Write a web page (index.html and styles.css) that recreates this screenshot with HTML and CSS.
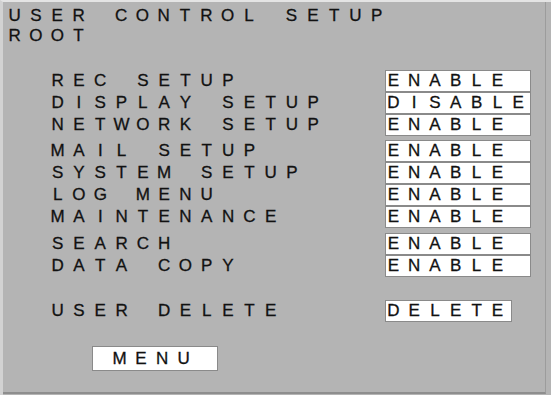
FILE: index.html
```html
<!DOCTYPE html>
<html>
<head>
<meta charset="utf-8">
<link rel="stylesheet" href="styles.css">
</head>
<body>
<div class="frame">
  <div class="panel">
    <div class="line"><span class="c">U</span><span class="c">S</span><span class="c">E</span><span class="c">R</span><span class="c">&nbsp;</span><span class="c">C</span><span class="c">O</span><span class="c">N</span><span class="c">T</span><span class="c">R</span><span class="c">O</span><span class="c">L</span><span class="c">&nbsp;</span><span class="c">S</span><span class="c">E</span><span class="c">T</span><span class="c">U</span><span class="c">P</span></div>
    <div class="line"><span class="c">R</span><span class="c">O</span><span class="c">O</span><span class="c">T</span></div>
    <div class="grid">
      <div class="label"><span class="c">R</span><span class="c">E</span><span class="c">C</span><span class="c">&nbsp;</span><span class="c">S</span><span class="c">E</span><span class="c">T</span><span class="c">U</span><span class="c">P</span></div>
      <div class="box"><span class="b">E</span><span class="b">N</span><span class="b">A</span><span class="b">B</span><span class="b">L</span><span class="b">E</span></div>

      <div class="label"><span class="c">D</span><span class="c">I</span><span class="c">S</span><span class="c">P</span><span class="c">L</span><span class="c">A</span><span class="c">Y</span><span class="c">&nbsp;</span><span class="c">S</span><span class="c">E</span><span class="c">T</span><span class="c">U</span><span class="c">P</span></div>
      <div class="box"><span class="b">D</span><span class="b">I</span><span class="b">S</span><span class="b">A</span><span class="b">B</span><span class="b">L</span><span class="b">E</span></div>

      <div class="label"><span class="c">N</span><span class="c">E</span><span class="c">T</span><span class="c">W</span><span class="c">O</span><span class="c">R</span><span class="c">K</span><span class="c">&nbsp;</span><span class="c">S</span><span class="c">E</span><span class="c">T</span><span class="c">U</span><span class="c">P</span></div>
      <div class="box"><span class="b">E</span><span class="b">N</span><span class="b">A</span><span class="b">B</span><span class="b">L</span><span class="b">E</span></div>

      <div class="label gap"><span class="c">M</span><span class="c">A</span><span class="c">I</span><span class="c">L</span><span class="c">&nbsp;</span><span class="c">S</span><span class="c">E</span><span class="c">T</span><span class="c">U</span><span class="c">P</span></div>
      <div class="box gap"><span class="b">E</span><span class="b">N</span><span class="b">A</span><span class="b">B</span><span class="b">L</span><span class="b">E</span></div>

      <div class="label"><span class="c">S</span><span class="c">Y</span><span class="c">S</span><span class="c">T</span><span class="c">E</span><span class="c">M</span><span class="c">&nbsp;</span><span class="c">S</span><span class="c">E</span><span class="c">T</span><span class="c">U</span><span class="c">P</span></div>
      <div class="box"><span class="b">E</span><span class="b">N</span><span class="b">A</span><span class="b">B</span><span class="b">L</span><span class="b">E</span></div>

      <div class="label"><span class="c">L</span><span class="c">O</span><span class="c">G</span><span class="c">&nbsp;</span><span class="c">M</span><span class="c">E</span><span class="c">N</span><span class="c">U</span></div>
      <div class="box"><span class="b">E</span><span class="b">N</span><span class="b">A</span><span class="b">B</span><span class="b">L</span><span class="b">E</span></div>

      <div class="label"><span class="c">M</span><span class="c">A</span><span class="c">I</span><span class="c">N</span><span class="c">T</span><span class="c">E</span><span class="c">N</span><span class="c">A</span><span class="c">N</span><span class="c">C</span><span class="c">E</span></div>
      <div class="box"><span class="b">E</span><span class="b">N</span><span class="b">A</span><span class="b">B</span><span class="b">L</span><span class="b">E</span></div>

      <div class="label gap2"><span class="c">S</span><span class="c">E</span><span class="c">A</span><span class="c">R</span><span class="c">C</span><span class="c">H</span></div>
      <div class="box gap2"><span class="b">E</span><span class="b">N</span><span class="b">A</span><span class="b">B</span><span class="b">L</span><span class="b">E</span></div>

      <div class="label"><span class="c">D</span><span class="c">A</span><span class="c">T</span><span class="c">A</span><span class="c">&nbsp;</span><span class="c">C</span><span class="c">O</span><span class="c">P</span><span class="c">Y</span></div>
      <div class="box"><span class="b">E</span><span class="b">N</span><span class="b">A</span><span class="b">B</span><span class="b">L</span><span class="b">E</span></div>

      <div class="label gap3"><span class="c">U</span><span class="c">S</span><span class="c">E</span><span class="c">R</span><span class="c">&nbsp;</span><span class="c">D</span><span class="c">E</span><span class="c">L</span><span class="c">E</span><span class="c">T</span><span class="c">E</span></div>
      <div class="box short gap3"><span class="b">D</span><span class="b">E</span><span class="b">L</span><span class="b">E</span><span class="b">T</span><span class="b">E</span></div>
    </div>
    <div class="menu-row"><div class="menu-btn"><span class="c">M</span><span class="c">E</span><span class="c">N</span><span class="c">U</span></div></div>
  </div>
</div>
</body>
</html>
```
FILE: styles.css
```css
html, body {
  margin: 0;
  padding: 0;
  background: #b4b4b4;
}
body {
  width: 551px;
  height: 395px;
  overflow: hidden;
  font-family: "Liberation Sans", Arial, sans-serif;
  font-size: 17px;
  color: #111;
  -webkit-text-stroke: 0.3px #111;
}
.frame {
  width: 551px;
  height: 395px;
  box-sizing: border-box;
  border-top: 2px solid #e4e4e4;
  border-left: 3px solid #d2d2d2;
  padding-right: 5px;
  padding-bottom: 1px;
  background: #b4b4b4;
}
.panel {
  height: 100%;
  box-sizing: border-box;
  border-right: 1px solid #9c9c9c;
  border-bottom: 2px solid #8e8e8e;
  padding-top: 4px;
  padding-left: 1px;
}
.c, .b {
  display: inline-block;
  text-align: center;
}
.c { width: 21.3px; }
.b { width: 20.8px; }
.line {
  line-height: 20px;
  height: 20px;
  white-space: nowrap;
}
.grid {
  display: grid;
  grid-template-columns: 338px 146px;
  margin-top: 24px;
  margin-left: 43px;
}
.label {
  line-height: 22px;
  height: 22px;
  white-space: nowrap;
}
.box {
  height: 22px;
  box-sizing: border-box;
  border: 1px solid #8a8a8a;
  background: #fff;
  line-height: 20px;
  text-indent: -2px;
  white-space: nowrap;
  overflow: hidden;
}
.gap { margin-top: 4px; }
.gap2 { margin-top: 5px; }
.gap3 { margin-top: 23px; }
.short { width: 127px; }
.menu-row {
  margin-top: 24px;
  margin-left: 88px;
}
.menu-btn {
  width: 126px;
  height: 25px;
  box-sizing: border-box;
  border: 1px solid #8a8a8a;
  background: #fff;
  line-height: 23px;
  padding-left: 16px;
  white-space: nowrap;
}
```
